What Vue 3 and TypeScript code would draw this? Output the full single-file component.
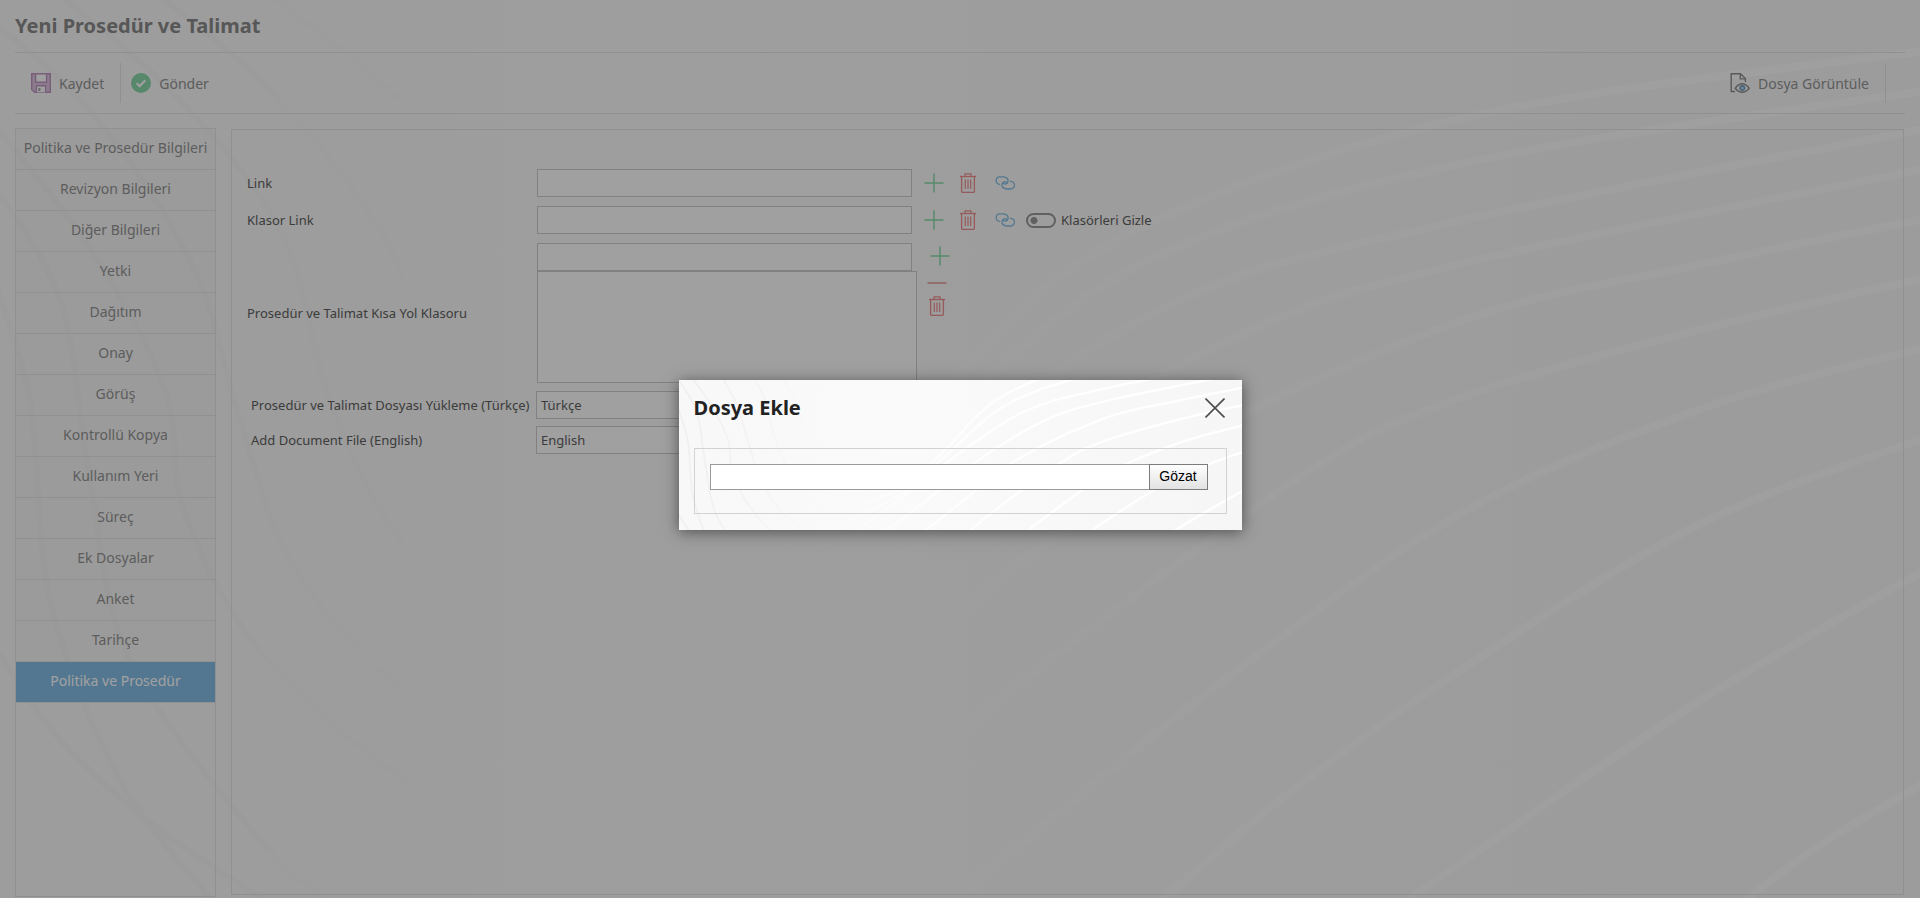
<script setup lang="ts">
import { ref } from 'vue'

type Point = [number, number]

const tabs: string[] = [
  'Politika ve Prosedür Bilgileri',
  'Revizyon Bilgileri',
  'Diğer Bilgileri',
  'Yetki',
  'Dağıtım',
  'Onay',
  'Görüş',
  'Kontrollü Kopya',
  'Kullanım Yeri',
  'Süreç',
  'Ek Dosyalar',
  'Anket',
  'Tarihçe',
  'Politika ve Prosedür',
]
const activeTab = ref(tabs.length - 1)

const link = ref('')
const folderLink = ref('')
const shortcut = ref('')
const shortcutList = ref('')
const fileTr = ref('Türkçe')
const fileEn = ref('English')
const hideFolders = ref(false)
const fileName = ref('')

// Smooth curve through a list of points (Catmull-Rom converted to cubic segments).
function smooth(points: Point[]): string {
  let d = `M${points[0][0]} ${points[0][1]}`
  for (let i = 0; i < points.length - 1; i++) {
    const p0 = points[Math.max(i - 1, 0)]
    const p1 = points[i]
    const p2 = points[i + 1]
    const p3 = points[Math.min(i + 2, points.length - 1)]
    d += ` C${p1[0] + (p2[0] - p0[0]) / 6} ${p1[1] + (p2[1] - p0[1]) / 6}`
    d += ` ${p2[0] - (p3[0] - p1[0]) / 6} ${p2[1] - (p3[1] - p1[1]) / 6}`
    d += ` ${p2[0]} ${p2[1]}`
  }
  return d
}

const lightWaves = (
  [
    [[1720, 920], [1820, 845], [1930, 780]],
    [[1380, 920], [1455, 867], [1698, 702], [1930, 567]],
    [[1140, 920], [1280, 800], [1455, 674], [1698, 525], [1930, 436]],
    [[930, 920], [1192, 705], [1455, 517], [1698, 410], [1930, 346]],
    [[755, 920], [993, 705], [1300, 477], [1455, 400], [1698, 330], [1930, 277]],
    [[560, 880], [840, 705], [1152, 466], [1455, 323], [1698, 265], [1930, 218]],
    [[440, 850], [708, 705], [1022, 466], [1240, 335], [1455, 265], [1930, 168]],
    [[380, 800], [606, 705], [925, 466], [1180, 300], [1455, 222], [1930, 128]],
    [[560, 680], [760, 580], [900, 460], [1130, 270], [1455, 165], [1930, 90]],
    [[560, 640], [760, 560], [900, 440], [1100, 250], [1455, 120], [1930, 50]],
  ] as Point[][]
).map(smooth)

const darkWaves = (
  [
    [[-10, 270], [30, 400], [50, 600], [120, 780], [220, 910]],
    [[-10, 180], [60, 300], [90, 480], [130, 660], [260, 840], [340, 910]],
    [[-60, 60], [82, 237], [164, 387], [181, 500], [232, 612], [310, 705], [430, 800]],
    [[-60, -20], [80, 100], [190, 260], [240, 420], [290, 560], [390, 680], [520, 760]],
    [[40, -20], [170, 90], [280, 230], [330, 400], [400, 540], [520, 650], [680, 710]],
    [[140, -20], [270, 90], [380, 230], [440, 370], [540, 490], [680, 580], [820, 600]],
    [[250, -20], [400, 100], [490, 220], [570, 340], [690, 430], [840, 460]],
    [[-10, 640], [60, 740], [160, 830], [280, 910]],
  ] as Point[][]
).map(smooth)
</script>

<template>
  <div class="page">
    <svg width="0" height="0" class="defs" aria-hidden="true">
      <defs>
        <linearGradient id="fade-out" gradientUnits="userSpaceOnUse" x1="0" y1="0" x2="620" y2="0">
          <stop offset="0" stop-color="#efefef" />
          <stop offset="0.4" stop-color="#f3f3f3" />
          <stop offset="1" stop-color="#fafafa" stop-opacity="0" />
        </linearGradient>
        <linearGradient id="fade-in" gradientUnits="userSpaceOnUse" x1="480" y1="0" x2="1300" y2="0">
          <stop offset="0" stop-color="#ffffff" stop-opacity="0" />
          <stop offset="0.5" stop-color="#ffffff" stop-opacity="0.8" />
          <stop offset="1" stop-color="#ffffff" />
        </linearGradient>
        <linearGradient id="shade" gradientUnits="userSpaceOnUse" x1="0" y1="0" x2="1920" y2="0">
          <stop offset="0" stop-color="#f8f8f8" />
          <stop offset="0.4" stop-color="#fafafa" />
          <stop offset="1" stop-color="#f6f6f6" />
        </linearGradient>
        <symbol id="waves" viewBox="0 0 1920 898" preserveAspectRatio="xMidYMid slice">
          <rect width="1920" height="898" fill="url(#shade)" />
          <g fill="none" stroke="url(#fade-out)" stroke-width="6">
            <path v-for="d in darkWaves" :key="d" :d="d" />
          </g>
          <g fill="none" stroke="url(#fade-in)" stroke-width="8">
            <path v-for="d in lightWaves" :key="d" :d="d" />
          </g>
        </symbol>
        <symbol id="plus" viewBox="0 0 20 20">
          <path d="M0.5 10H19.5M10 0.5V19.5" fill="none" stroke="#86d9a6" stroke-width="1.4" />
        </symbol>
        <symbol id="trash" viewBox="0 0 20 20">
          <g fill="none" stroke="#ee8f8f">
            <path d="M2 3.5H18" stroke-width="1.4" />
            <path d="M7 3V0.8H13V3" stroke-width="1.2" />
            <path d="M3.6 4V18.2Q3.6 19.4 4.8 19.4H15.2Q16.4 19.4 16.4 18.2V4" stroke-width="1.3" />
            <path d="M7.3 6.5V16M10 6.5V16M12.7 6.5V16" stroke-width="1.2" />
          </g>
        </symbol>
        <symbol id="chain" viewBox="0 0 20 14">
          <g fill="none" stroke="#86bfe3" stroke-width="1.3" stroke-linecap="round">
            <path d="M4.6 8.3A3.8 3.8 0 0 1 4.2 0.8H8.4Q11.8 1 13 3.6Q13.6 6.6 11 7.9Q8.6 8.4 8 6.8" />
            <path d="M15.4 5.3A3.8 3.8 0 0 1 15.8 13H11.6Q8.2 12.8 7 10Q6.4 7 9 5.8Q11.4 5.2 12 6.8" />
          </g>
        </symbol>
      </defs>
    </svg>

    <svg class="waves soft"><use href="#waves" /></svg>

    <h1 class="title">Yeni Prosedür ve Talimat</h1>

    <div class="toolbar">
      <button type="button" class="tool save">
        <svg width="20" height="20" viewBox="0 0 20 20">
          <path d="M0.7 0.7H19.3V19.3H3.6L0.7 16.4Z" fill="#dcc3de" stroke="#c096c3" stroke-width="1.4" />
          <path d="M4.6 0.7H15.6V9.3H4.6Z" fill="#fafafa" stroke="#c096c3" stroke-width="1.4" />
          <path d="M5.4 19.3V12.7H14.6V19.3" fill="#fafafa" stroke="#c096c3" stroke-width="1.4" />
          <path d="M7.4 15H9.4V18H7.4Z" fill="#a9a0aa" />
        </svg>
        <span>Kaydet</span>
      </button>
      <button type="button" class="tool send">
        <svg width="20" height="20" viewBox="0 0 20 20">
          <circle cx="10" cy="10" r="10" fill="#8ad8aa" />
          <path d="M5.6 10.2L8.7 13.1L14.4 7.3" fill="none" stroke="#fafafa" stroke-width="2.2" />
        </svg>
        <span>Gönder</span>
      </button>
      <button type="button" class="tool view">
        <svg width="20" height="20" viewBox="0 0 20 20">
          <g fill="none" stroke="#8e8e8e" stroke-width="1.4">
            <path d="M5 18.5H1.2V0.8H10.5L15.4 5.6V9" />
            <path d="M10.3 1V5.9H15.2" />
            <path d="M5.2 15.2Q12.2 6.4 19.2 15.2Q12.2 23.4 5.2 15.2Z" />
          </g>
          <circle cx="12.3" cy="15" r="2.3" fill="#b8d4e8" stroke="#6d9cc0" stroke-width="1.4" />
        </svg>
        <span>Dosya Görüntüle</span>
      </button>
    </div>

    <div class="body">
      <nav class="tabs">
        <button
          v-for="(tab, i) in tabs"
          :key="tab"
          type="button"
          class="tab"
          :class="{ active: i === activeTab }"
          @click="activeTab = i"
        >
          {{ tab }}
        </button>
      </nav>

      <main class="panel">
        <div class="row">
          <label for="link">Link</label>
          <input id="link" v-model="link" type="text" />
          <div class="icons">
            <button type="button" aria-label="Ekle"><svg width="20" height="20"><use href="#plus" /></svg></button>
            <button type="button" aria-label="Sil"><svg width="20" height="20"><use href="#trash" /></svg></button>
            <button type="button" aria-label="Bağlantı"><svg width="20" height="14"><use href="#chain" /></svg></button>
          </div>
        </div>

        <div class="row">
          <label for="folder">Klasor Link</label>
          <input id="folder" v-model="folderLink" type="text" />
          <div class="icons">
            <button type="button" aria-label="Ekle"><svg width="20" height="20"><use href="#plus" /></svg></button>
            <button type="button" aria-label="Sil"><svg width="20" height="20"><use href="#trash" /></svg></button>
            <button type="button" aria-label="Bağlantı"><svg width="20" height="14"><use href="#chain" /></svg></button>
          </div>
          <div class="switch">
            <input id="hide" v-model="hideFolders" type="checkbox" />
            <label for="hide">Klasörleri Gizle</label>
          </div>
        </div>

        <div class="row shortcut">
          <label for="shortcut">Prosedür ve Talimat Kısa Yol Klasoru</label>
          <div class="stack">
            <div class="line">
              <input id="shortcut" v-model="shortcut" type="text" />
              <button type="button" class="add" aria-label="Ekle">
                <svg width="20" height="20"><use href="#plus" /></svg>
              </button>
            </div>
            <div class="line">
              <textarea v-model="shortcutList" aria-label="Kısa yol listesi"></textarea>
              <div class="side">
                <button type="button" aria-label="Çıkar">
                  <svg width="20" height="4" viewBox="0 0 20 4">
                    <path d="M0.5 2H19.5" stroke="#e09090" stroke-width="1.4" />
                  </svg>
                </button>
                <button type="button" aria-label="Sil"><svg width="20" height="20"><use href="#trash" /></svg></button>
              </div>
            </div>
          </div>
        </div>

        <div class="row file">
          <label for="file-tr">Prosedür ve Talimat Dosyası Yükleme (Türkçe)</label>
          <input id="file-tr" v-model="fileTr" type="text" />
        </div>
        <div class="row file">
          <label for="file-en">Add Document File (English)</label>
          <input id="file-en" v-model="fileEn" type="text" />
        </div>
      </main>
    </div>

    <div class="overlay">
      <section class="modal" role="dialog" aria-modal="true" aria-labelledby="modal-title">
        <svg class="waves"><use href="#waves" /></svg>
        <header class="modal-head">
          <h2 id="modal-title">Dosya Ekle</h2>
          <button type="button" class="close" aria-label="Kapat">
            <svg width="20" height="20" viewBox="0 0 20 20">
              <path d="M0.5 0.5L19.5 19.5M19.5 0.5L0.5 19.5" fill="none" stroke="#4c4c4c" stroke-width="1.6" />
            </svg>
          </button>
        </header>
        <div class="upload">
          <input v-model="fileName" type="text" aria-label="Dosya" />
          <button type="button">Gözat</button>
        </div>
      </section>
    </div>
  </div>
</template>

<style>
body {
  margin: 0;
}
</style>

<style scoped>
.page {
  position: relative;
  isolation: isolate;
  display: flex;
  flex-direction: column;
  box-sizing: border-box;
  min-height: 100vh;
  padding: 0 15px 1px;
  overflow: hidden;
  background: #fafafa;
  color: #606060;
  font-family: 'Noto Sans', sans-serif;
  font-size: 13px;
}

.defs {
  position: absolute;
}

.waves {
  position: absolute;
  inset: 0;
  z-index: -1;
  width: 100%;
  height: 100%;
}

.waves.soft {
  opacity: 0.45;
}

button,
input,
textarea {
  box-sizing: border-box;
  margin: 0;
  padding: 0;
  border: 0;
  border-radius: 0;
  background: none;
  color: inherit;
  font: inherit;
}

button svg {
  display: block;
}

.title {
  margin: 0;
  color: #8a8a8a;
  font-size: 20px;
  line-height: 52px;
}

.toolbar {
  display: flex;
  align-items: center;
  height: 60px;
  border: solid #e4e4e4;
  border-width: 1px 0;
}

.tool {
  display: flex;
  align-items: center;
  gap: 8px;
  height: 40px;
  color: #939393;
  font-size: 14px;
}

.save {
  padding: 0 16px;
  border-right: 1px solid #e4e4e4;
}

.send {
  padding-left: 10px;
}

.view {
  margin-left: auto;
  margin-right: 19px;
  padding-right: 16px;
  border-right: 1px solid #e4e4e4;
}

.body {
  display: flex;
  flex: 1;
  gap: 15px;
  padding-top: 14px;
}

.tabs {
  display: flex;
  flex: 0 0 199px;
  flex-direction: column;
  border: 1px solid #e4e4e4;
}

.tab {
  height: 41px;
  padding-bottom: 3px;
  border-bottom: 1px solid #e4e4e4;
  background: rgba(0, 0, 0, 0.01);
  color: #939393;
  font-size: 14px;
}

.tab.active {
  background: #84bce6;
  color: #ffffff;
}

.panel {
  flex: 1;
  margin: 1px 1px 2px 0;
  padding: 39px 15px 0;
  border: 1px solid #e4e4e4;
}

.row {
  display: flex;
  align-items: center;
  margin-bottom: 9px;
}

.row > label {
  flex: 0 0 290px;
  white-space: nowrap;
}

.row input[type='text'],
textarea {
  border: 1px solid #cccccc;
  background: #fefefe;
}

.row input[type='text'] {
  width: 375px;
  height: 28px;
  padding: 0 4px;
}

.icons {
  display: flex;
  align-items: center;
  margin-left: 12px;
}

.icons button {
  margin-right: 14px;
}

.icons button:last-child {
  margin: 0 0 0 3px;
}

.switch {
  display: flex;
  align-items: center;
  gap: 5px;
  margin-left: 11px;
}

.switch input {
  width: 30px;
  height: 15px;
  border: 2px solid #999999;
  border-radius: 8px;
  appearance: none;
  background: radial-gradient(circle at 6px 50%, #999999 3px, transparent 4px);
}

.switch input:checked {
  background: radial-gradient(circle at 20px 50%, #999999 3px, transparent 4px);
}

.line {
  display: flex;
}

.add {
  align-self: flex-start;
  margin: 3px 0 0 18px;
}

textarea {
  width: 380px;
  height: 112px;
  resize: none;
}

.side {
  display: flex;
  flex-direction: column;
  gap: 11px;
  padding: 10px 0 0 10px;
}

.row.shortcut {
  margin-bottom: 8px;
}

.row.file {
  margin-bottom: 7px;
  padding-left: 4px;
}

.row.file > label {
  flex-basis: 285px;
}

.overlay {
  position: absolute;
  inset: 0;
  display: flex;
  align-items: flex-start;
  justify-content: center;
  padding-top: 380px;
  background: rgba(0, 0, 0, 0.37);
}

.modal {
  position: relative;
  isolation: isolate;
  box-sizing: border-box;
  width: 563px;
  padding: 0 15px 16px;
  background: #fafafa;
  box-shadow: 0 2px 14px rgba(0, 0, 0, 0.5);
}

.modal-head {
  display: flex;
  align-items: center;
  justify-content: space-between;
  height: 56px;
  margin-bottom: 12px;
  padding-right: 2px;
}

.modal-head h2 {
  margin: 0;
  padding-bottom: 2px;
  color: #222222;
  font-size: 20px;
}

.upload {
  display: flex;
  padding: 15px 18px 23px 15px;
  border: 1px solid #d2d2d2;
}

.upload input {
  flex: 1;
  height: 26px;
  border: 1px solid #999999;
  border-right: 0;
  background: #ffffff;
}

.upload button {
  width: 59px;
  height: 26px;
  padding-bottom: 2px;
  border: 1px solid #7c7c7c;
  background: linear-gradient(#fefefe, #e2e2e2);
  color: #000000;
  font-family: 'Liberation Sans', Arial, sans-serif;
  font-size: 14px;
}
</style>
